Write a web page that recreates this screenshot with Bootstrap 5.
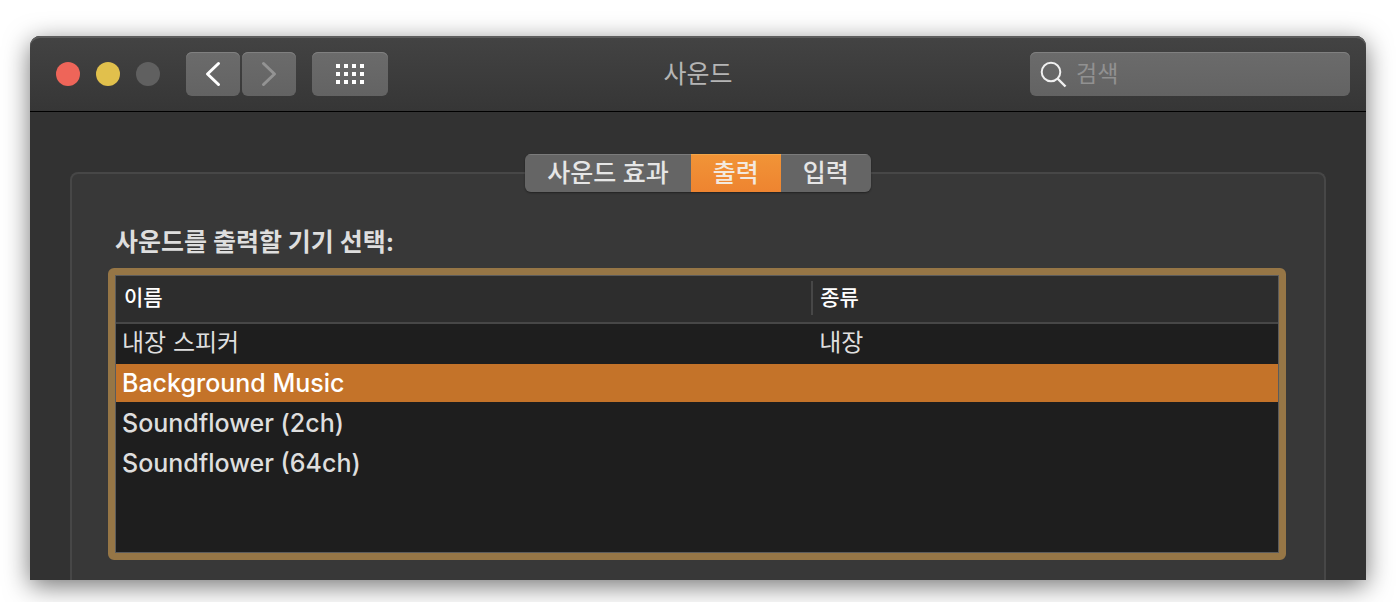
<!DOCTYPE html>
<html lang="ko">
<head>
<meta charset="utf-8">
<meta name="viewport" content="width=device-width, initial-scale=1">
<title>사운드</title>
<link href="https://cdn.jsdelivr.net/npm/bootstrap@5.3.0/dist/css/bootstrap.min.css" rel="stylesheet">
<style>
  body { background: #fff; font-family: Inter, "Noto Sans CJK KR", sans-serif; font-size: 25px; line-height: 36px; color: #dedede; }
  .stage { padding: 36px 30px 22px; min-height: 100vh; }
  .window { background: #323232; border-radius: 10px 10px 0 0; box-shadow: 0 6px 26px rgba(0,0,0,.55); }
  .titlebar { height: 76px; padding: 0 16px; background: linear-gradient(#434343, #363636); border-bottom: 1px solid #000; border-radius: 10px 10px 0 0; box-shadow: inset 0 2px 0 #5c5c5c; }
  .side { flex: 1 1 0; }
  .lights { padding: 0 26px 0 10px; }
  .light { width: 24px; height: 24px; border: 0; padding: 0; border-radius: 50%; background: #606060; }
  .light-close { background: #ee6559; }
  .light-min { background: #e1c04c; }
  .tool { height: 44px; padding: 0; border: 0; border-radius: 6px; background: linear-gradient(#6b6b6b, #636363); box-shadow: inset 0 1px 0 #808080; }
  .nav-pair { gap: 2px; }
  .tool-nav { width: 54px; }
  .tool-grid { width: 76px; }
  .window-title { font-size: 25px; line-height: 36px; color: #b5b5b5; font-weight: 400; }
  .search { width: 320px; padding: 0 10px; }
  .search input { background: transparent; border: 0; outline: 0; color: #eee; font-size: 23px; line-height: 36px; padding: 0; min-width: 0; }
  .search input::placeholder { color: #919191; opacity: 1; }
  .content { padding: 42px 40px 0; }
  .tabs { z-index: 1; margin-bottom: -20px; border-radius: 6px; overflow: hidden; box-shadow: 0 1px 2px rgba(0,0,0,.4); }
  .tabs button { height: 38px; border: 0; padding: 0 22px; line-height: 36px; color: #e6e6e6; background: #656565; box-shadow: inset 0 1px 0 #7b7b7b; font-weight: 500; }
  .tabs button.active { color: #f3e9df; background: linear-gradient(#f19437, #ee8430); box-shadow: inset 0 1px 0 #f2a649; }
  .group { border: 2px solid #474747; border-bottom: 0; border-radius: 8px 8px 0 0; background: #383838; padding: 50px 38px 20px 36px; }
  .prompt { font-size: 25px; line-height: 36px; font-weight: 700; padding: 0 7px; margin: 0 0 8px; }
  .listbox { border: 7px solid #967646; border-radius: 6px; background: #1e1e1e; height: 292px; }
  .listbox-inner { border: 1px solid #5c5c5c; height: 100%; }
  .devices { width: 100%; table-layout: fixed; border-collapse: separate; border-spacing: 0; }
  .devices th { height: 48px; padding: 0 8px 2px; background: #2d2d2d; border-bottom: 2px solid #474747; color: #fff; font-size: 21px; line-height: 36px; font-weight: 500; }
  .devices th:first-child { width: 60%; }
  .divider { width: 2px; height: 34px; margin-left: -10px; margin-right: 7px; background: #474747; }
  .devices td { height: 40px; padding: 0 6px; font-size: 24px; line-height: 38px; border-bottom: 2px solid #1e1e1e; background: #1e1e1e; }
  .devices .latin { font-size: 25px; font-weight: 500; }
  .devices .selected td { background: #c47329; color: #fff; }
</style>
</head>
<body>
<div class="stage">
  <main class="window">
    <header class="titlebar d-flex align-items-center">
      <div class="side d-flex align-items-center">
        <div class="lights d-flex gap-3">
          <button class="light light-close" type="button" aria-label="닫기"></button>
          <button class="light light-min" type="button" aria-label="최소화"></button>
          <button class="light" type="button" aria-label="확대" disabled></button>
        </div>
        <div class="nav-pair d-flex">
          <button class="tool tool-nav d-flex align-items-center justify-content-center" type="button" aria-label="뒤로">
            <svg width="16" height="26" viewBox="0 0 16 26" fill="none" stroke="#fff" stroke-width="3" stroke-linecap="round" stroke-linejoin="round"><path d="M13.500 2.500 2.500 13 13.500 23.500"/></svg>
          </button>
          <button class="tool tool-nav d-flex align-items-center justify-content-center" type="button" aria-label="앞으로">
            <svg width="16" height="26" viewBox="0 0 16 26" fill="none" stroke="#939393" stroke-width="3" stroke-linecap="round" stroke-linejoin="round"><path d="M2.500 2.500 13.500 13 2.500 23.500"/></svg>
          </button>
        </div>
        <button class="tool tool-grid d-flex align-items-center justify-content-center ms-3" type="button" aria-label="모두 보기">
          <svg width="28" height="20" viewBox="0 0 28 20" fill="#fff"><path d="M0 0h4v4H0zM8 0h4v4H8zM16 0h4v4h-4zM24 0h4v4h-4zM0 8h4v4H0zM8 8h4v4H8zM16 8h4v4h-4zM24 8h4v4h-4zM0 16h4v4H0zM8 16h4v4H8zM16 16h4v4h-4zM24 16h4v4h-4z"/></svg>
        </button>
      </div>
      <h1 class="window-title m-0">사운드</h1>
      <div class="side d-flex justify-content-end">
        <label class="search tool d-flex align-items-center gap-2">
          <svg class="flex-shrink-0" width="28" height="28" viewBox="0 0 28 28" fill="none" stroke="#f0f0f0" stroke-width="2"><circle cx="11" cy="12" r="9.3"/><path d="M17.500 18.500 25.500 26.500" stroke-width="2.400"/></svg>
          <input class="flex-grow-1" type="text" placeholder="검색" aria-label="검색">
        </label>
      </div>
    </header>
    <div class="content">
      <div class="d-flex justify-content-center">
        <div class="tabs d-flex position-relative" role="tablist">
          <button type="button" role="tab" aria-selected="false">사운드 효과</button>
          <button class="active" type="button" role="tab" aria-selected="true">출력</button>
          <button type="button" role="tab" aria-selected="false">입력</button>
        </div>
      </div>
      <section class="group">
        <h2 class="prompt">사운드를 출력할 기기 선택:</h2>
        <div class="listbox">
          <div class="listbox-inner">
            <table class="devices">
              <thead><tr><th scope="col">이름</th><th scope="col"><div class="d-flex align-items-center"><span class="divider"></span>종류</div></th></tr></thead>
              <tbody>
                <tr><td>내장 스피커</td><td>내장</td></tr>
                <tr class="selected"><td class="latin">Background Music</td><td></td></tr>
                <tr><td class="latin">Soundflower (2ch)</td><td></td></tr>
                <tr><td class="latin">Soundflower (64ch)</td><td></td></tr>
              </tbody>
            </table>
          </div>
        </div>
      </section>
    </div>
  </main>
</div>
<script src="https://cdn.jsdelivr.net/npm/bootstrap@5.3.0/dist/js/bootstrap.bundle.min.js"></script>
</body>
</html>
